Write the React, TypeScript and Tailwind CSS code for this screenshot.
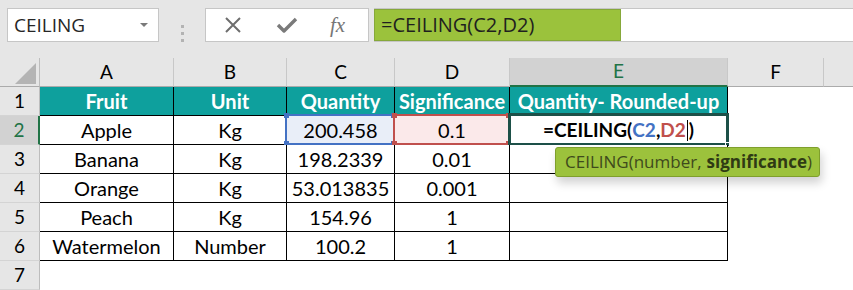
import React from "react";

const CELL_FONT = { fontFamily: "Lato, 'Liberation Sans', sans-serif" };
const UI_FONT = { fontFamily: "'Open Sans', 'Liberation Sans', sans-serif" };

const COLS = ["A", "B", "C", "D", "E", "F"];

const ROWS: string[][] = [
  ["Fruit", "Unit", "Quantity", "Significance", "Quantity- Rounded-up"],
  ["Apple", "Kg", "200.458", "0.1", ""],
  ["Banana", "Kg", "198.2339", "0.01", ""],
  ["Orange", "Kg", "53.013835", "0.001", ""],
  ["Peach", "Kg", "154.96", "1", ""],
  ["Watermelon", "Number", "100.2", "1", ""],
];

function Handles({ color }: { color: string }) {
  return (
    <>
      <span className={`absolute -left-[3px] -top-[3px] h-[5px] w-[5px] ${color}`} />
      <span className={`absolute -right-[3px] -top-[3px] h-[5px] w-[5px] ${color}`} />
      <span className={`absolute -left-[3px] -bottom-[3px] h-[5px] w-[5px] ${color}`} />
      <span className={`absolute -right-[3px] -bottom-[3px] h-[5px] w-[5px] ${color}`} />
    </>
  );
}

function FormulaBar() {
  return (
    <div className="flex h-[58px] bg-[#e6e6e6] pl-[7px] pt-[8px]" style={UI_FONT}>
      {/* Name box */}
      <div className="flex h-[34px] w-[152px] items-center justify-between border border-[#c6c6c6] bg-white pl-[6px] pr-[10px]">
        <span className="text-[19px] text-[#262626]">CEILING</span>
        <span className="h-0 w-0 border-x-[4px] border-t-[4px] border-x-transparent border-t-[#7a7a7a]" />
      </div>

      {/* grip dots */}
      <div className="flex w-[46px] flex-col items-center justify-center gap-[4px]">
        <span className="h-[3px] w-[3px] bg-[#b3b3b3]" />
        <span className="h-[3px] w-[3px] bg-[#b3b3b3]" />
        <span className="h-[3px] w-[3px] bg-[#b3b3b3]" />
      </div>

      {/* Cancel / enter / fx */}
      <div className="flex h-[34px] w-[164px] items-center border border-[#c6c6c6] bg-white">
        <svg width="18" height="18" viewBox="0 0 18 18" className="ml-[18px]">
          <path d="M2 2 L16 16 M16 2 L2 16" stroke="#6e6e6e" strokeWidth="2" fill="none" />
        </svg>
        <svg width="22" height="18" viewBox="0 0 22 18" className="ml-[34px]">
          <path d="M2 9 L8 15 L20 3" stroke="#7a7a7a" strokeWidth="3.4" fill="none" strokeLinejoin="round" />
        </svg>
        <span
          className="ml-[32px] text-[21px] italic leading-none text-[#767676]"
          style={{ fontFamily: "'Liberation Serif', serif" }}
        >
          fx
        </span>
      </div>

      {/* Formula input */}
      <div className="ml-[5px] flex h-[34px] flex-1 border-y border-[#c6c6c6] bg-white">
        <div className="flex w-[247px] items-center border border-[#86a83a] bg-[#9bc23c] pl-[6px] text-[20px] text-[#1f1f1f]">
          =CEILING(C2,D2)
        </div>
      </div>
    </div>
  );
}

function Sheet() {
  const cells: React.ReactNode[] = [];

  // Column header row
  cells.push(
    <div key="corner" className="relative border-b border-r border-b-[#ababab] border-r-[#bdbdbd] bg-[#e6e6e6]">
      <svg width="22" height="21" viewBox="0 0 22 21" className="absolute left-[15px] top-[5px]">
        <path d="M21 0 L21 21 L0 21 Z" fill="#b4b4b4" />
      </svg>
    </div>
  );
  COLS.forEach((c) => {
    const active = c === "E";
    cells.push(
      <div
        key={`h-${c}`}
        className={`flex items-center justify-center border-r border-r-[#c8c8c8] text-[19px] ${
          active
            ? "border-b-2 border-b-[#217346] bg-[#d2d2d2] text-[#217346]"
            : "border-b border-b-[#ababab] bg-[#e6e6e6] text-black"
        }`}
        style={CELL_FONT}
      >
        {c}
      </div>
    );
  });
  cells.push(<div key="h-fill" className="border-b border-b-[#ababab] bg-[#e6e6e6]" />);

  // Data rows
  for (let r = 0; r < 7; r++) {
    const rowNo = r + 1;
    const activeRow = rowNo === 2;
    cells.push(
      <div
        key={`rh-${rowNo}`}
        className={`flex items-center justify-center border-b border-b-[#d4d4d4] text-[19px] ${
          activeRow
            ? "border-r-2 border-r-[#217346] bg-[#d2d2d2] text-[#217346]"
            : "border-r border-r-[#bdbdbd] bg-[#e6e6e6] text-black"
        }`}
        style={CELL_FONT}
      >
        {rowNo}
      </div>
    );

    const row = ROWS[r];
    for (let c = 0; c < 5; c++) {
      const key = `${COLS[c]}${rowNo}`;
      if (!row) {
        cells.push(<div key={key} className="bg-white" />);
        continue;
      }
      const isHeader = r === 0;
      let cls = "relative flex items-center justify-center border-b border-r border-black text-[20px] whitespace-nowrap";
      if (isHeader) cls += " bg-[#0ea09d] font-bold text-white";
      else if (key === "C2") cls += " bg-[#e9eef8] text-black";
      else if (key === "D2") cls += " bg-[#fbe9ea] text-black";
      else cls += " bg-white text-black";

      cells.push(
        <div key={key} className={cls} style={CELL_FONT}>
          {key === "E2" ? (
            <span className="flex items-center text-[19px] font-bold">
              =CEILING(<span className="text-[#4472c4]">C2</span>,<span className="text-[#c0504d]">D2</span>
              <span className="mx-[1px] inline-block h-[21px] w-[1px] bg-black" />)
            </span>
          ) : (
            row[c]
          )}
          {key === "C2" && (
            <span className="absolute -bottom-[1px] -left-[2px] -right-[1px] -top-[2px] border-2 border-[#4472c4]">
              <Handles color="bg-[#4472c4]" />
            </span>
          )}
          {key === "D2" && (
            <span className="absolute -bottom-[1px] -left-[2px] -right-[1px] -top-[2px] border-2 border-[#c0504d]">
              <Handles color="bg-[#c0504d]" />
            </span>
          )}
          {key === "E2" && (
            <span className="absolute -bottom-[2px] -left-[2px] -right-[2px] -top-[3px] border-[3px] border-[#1d5048]">
              <span className="absolute -bottom-[4px] -right-[4px] h-[5px] w-[5px] border border-white bg-[#1d5048]" />
            </span>
          )}
        </div>
      );
    }
    cells.push(<div key={`F${rowNo}`} className="bg-white" />);
    cells.push(<div key={`fill${rowNo}`} className="bg-white" />);
  }

  return (
    <div className="grid grid-cols-[40px_134px_113px_108px_115px_218px_96px_1fr] grid-rows-[29px_29px_29px_29px_29px_29px_29px_29px_4px]">
      {cells}
    </div>
  );
}

export default function App() {
  return (
    <div className="relative h-[290px] w-[853px] overflow-hidden bg-white">
      <FormulaBar />
      <Sheet />

      {/* Function argument tooltip */}
      <div
        className="absolute left-[555px] top-[147px] flex h-[30px] w-[265px] items-center rounded-[3px] border border-[#7f9f2c] bg-[#9cc23c] pl-[9px] text-[17px] text-[#3f4a1c] shadow-[2px_6px_10px_rgba(0,0,0,0.18)]"
        style={UI_FONT}
      >
        CEILING(number, <span className="ml-[5px] font-bold text-[#2f3a14]">significance</span>)
      </div>
    </div>
  );
}
